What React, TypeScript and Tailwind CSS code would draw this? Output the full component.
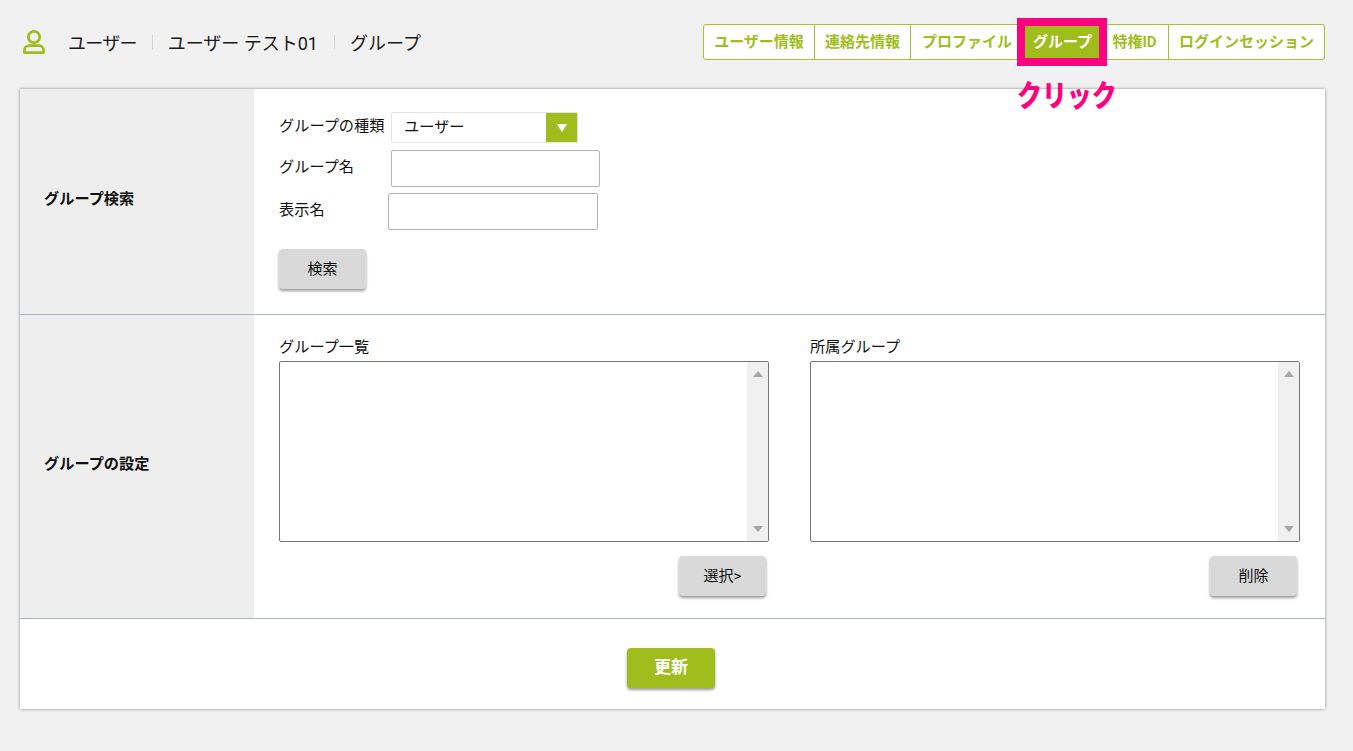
import type { ReactNode } from "react";

const font = "font-['Roboto','Noto_Sans_CJK_JP',sans-serif]";

function UserIcon() {
  return (
    <svg width="22" height="24" viewBox="0 0 22 24" fill="none" stroke="#9fbe1e" strokeWidth="2.7">
      <circle cx="11" cy="7" r="5.700" />
      <path d="M1.400 22.600v-2.400c0-2.800 2.200-4.500 4.600-4.500h10c2.400 0 4.600 1.700 4.600 4.500v2.400z" strokeLinejoin="round" />
    </svg>
  );
}

function GrayButton({ children }: { children: ReactNode }) {
  return (
    <button className="w-[87px] h-[40px] rounded-[4px] bg-[#d9d9d9] text-[15px] text-[#111] shadow-[0_2px_3px_rgba(0,0,0,0.4)]">
      {children}
    </button>
  );
}

function ListBox({ label, button }: { label: string; button: string }) {
  return (
    <div className="w-[490px]">
      <div className="h-[24px] text-[15.2px] leading-[22px] text-[#111] mb-[1px]">{label}</div>
      <div className="h-[181px] border border-[#767676] rounded-[2px] bg-white flex justify-end">
        <div className="w-[21px] bg-[#f0f0f0] flex flex-col items-center justify-between py-[9px]">
          <span className="w-0 h-0 border-x-[5px] border-x-transparent border-b-[6px] border-b-[#a6a6a6]" />
          <span className="w-0 h-0 border-x-[5px] border-x-transparent border-t-[6px] border-t-[#a6a6a6]" />
        </div>
      </div>
      <div className="flex justify-end mt-[14px] pr-[3px]">
        <GrayButton>{button}</GrayButton>
      </div>
    </div>
  );
}

const tabs = [
  { name: "ユーザー情報", w: "w-[112px]" },
  { name: "連絡先情報", w: "w-[96px]" },
  { name: "プロファイル", w: "w-[113px]" },
  { name: "グループ", w: "w-[77px]", active: true },
  { name: "特権ID", w: "w-[68px]" },
  { name: "ログインセッション", w: "w-[156px]" },
];

export default function App() {
  return (
    <div className={"w-[1353px] h-[751px] bg-[#f1f1f1] overflow-hidden pl-[20px] pr-[28px] " + font}>
      <header className="h-[89px] flex justify-between pt-[24px]">
        <div className="flex items-center h-[36px] text-[18px] text-[#1a1a1a]">
          <span className="ml-[3px] mr-[23px] flex"><UserIcon /></span>
          <span className="pt-[3px] tracking-[-0.75px]">ユーザー</span>
          <span className="w-px h-[14px] bg-[#d4d4d4] ml-[15px] mr-[15px]" />
          <span className="pt-[3px]">ユーザー テスト01</span>
          <span className="w-px h-[14px] bg-[#d4d4d4] ml-[16px] mr-[15px]" />
          <span className="pt-[3px]">グループ</span>
        </div>
        <div className="relative flex h-[36px]">
          {tabs.map((t, i) => (
            <div
              key={t.name}
              className={
                "flex items-center justify-center text-[15px] font-bold border-y border-[#a5c22f] " +
                t.w + " " +
                (t.active
                  ? "bg-[#9fbe1e] text-white relative"
                  : "bg-white text-[#9fbe1e] border-r ") +
                (i === 0 ? " border-l rounded-l-[3px]" : "") +
                (i === tabs.length - 1 ? " rounded-r-[3px]" : "")
              }
            >
              {t.name}
              {t.active && (
                <div className="absolute left-[-7px] top-[-7px] w-[90px] h-[48px] border-[8px] border-[#ff0080]" />
              )}
              {t.active && (
                <div className="absolute left-[-7px] top-[49px] whitespace-nowrap text-[#ff0080] text-[30px] leading-[44px] font-black origin-left scale-x-[0.83]">
                  クリック
                </div>
              )}
            </div>
          ))}
        </div>
      </header>

      <main className="w-[1305px] h-[620px] bg-white shadow-[0_0_3px_rgba(0,0,0,0.45)]">
        <section className="h-[226px] flex border-b border-[#a2b6c6]">
          <div className="w-[234px] bg-[#eeeeee] flex items-center pl-[24px] pb-[4px] text-[15.2px] font-bold text-[#111]">
            グループ検索
          </div>
          <div className="pt-[23px] pl-[25px] text-[15.2px] text-[#111]">
            <div className="flex items-center h-[31px]">
              <span className="w-[112px] pb-[2px] whitespace-nowrap">グループの種類</span>
              <div className="w-[187px] h-[31px] flex border border-[#e2e2e2] rounded-[2px]">
                <span className="flex-1 pl-[12px] leading-[29px]">ユーザー</span>
                <span className="w-[31px] bg-[#9fbe1e] flex items-center justify-center">
                  <span className="w-0 h-0 border-x-[5px] border-x-transparent border-t-[8px] border-t-white" />
                </span>
              </div>
            </div>
            <div className="flex items-center mt-[7px]">
              <span className="w-[112px] pb-[2px]">グループ名</span>
              <div className="w-[209px] h-[37px] border border-[#b3b3b3] rounded-[2px]" />
            </div>
            <div className="flex items-center mt-[6px]">
              <span className="w-[109px] pb-[2px]">表示名</span>
              <div className="w-[210px] h-[37px] border border-[#b3b3b3] rounded-[2px]" />
            </div>
            <div className="mt-[19px]">
              <GrayButton>検索</GrayButton>
            </div>
          </div>
        </section>

        <section className="h-[304px] flex border-b border-[#a2b6c6]">
          <div className="w-[234px] bg-[#eeeeee] flex items-center pl-[24px] pb-[4px] text-[15.2px] font-bold text-[#111]">
            グループの設定
          </div>
          <div className="flex gap-[41px] pl-[25px] pt-[21px]">
            <ListBox label="グループ一覧" button="選択>" />
            <ListBox label="所属グループ" button="削除" />
          </div>
        </section>

        <section className="flex justify-center pt-[29px] pr-[3px]">
          <button className="w-[88px] h-[40px] rounded-[4px] bg-[#9fbe1e] text-white text-[17px] font-bold shadow-[0_2px_3px_rgba(0,0,0,0.4)]">
            更新
          </button>
        </section>
      </main>
    </div>
  );
}
